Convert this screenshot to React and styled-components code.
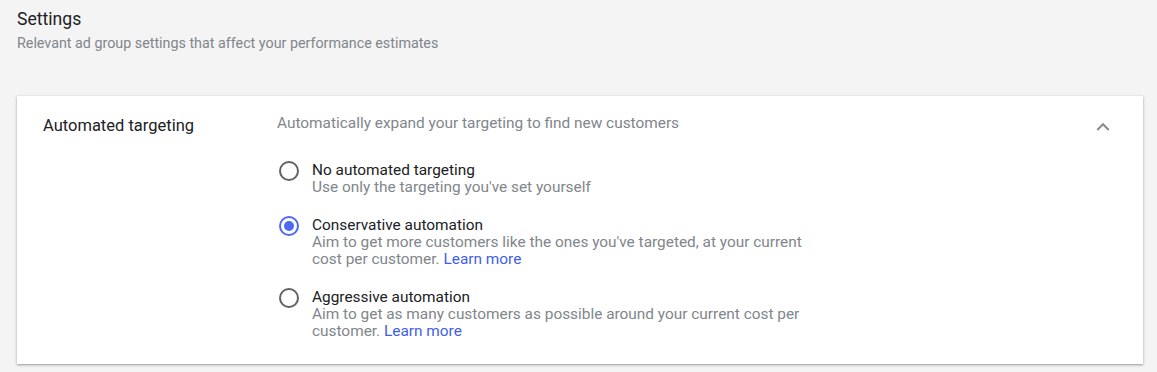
import React, { useState } from 'react';
import styled, { createGlobalStyle } from 'styled-components';

const options = [
  {
    id: 'none',
    title: 'No automated targeting',
    desc: "Use only the targeting you've set yourself",
    learn: false
  },
  {
    id: 'conservative',
    title: 'Conservative automation',
    desc: "Aim to get more customers like the ones you've targeted, at your current cost per customer.",
    learn: true
  },
  {
    id: 'aggressive',
    title: 'Aggressive automation',
    desc: 'Aim to get as many customers as possible around your current cost per customer.',
    learn: true
  }
];

function App() {
  const [selected, setSelected] = useState('conservative');

  return (
    <>
      <GlobalStyle />
      <Page>
        <Header>
          <Title>Settings</Title>
          <Subtitle>Relevant ad group settings that affect your performance estimates</Subtitle>
        </Header>
        <Card>
          <Label>Automated targeting</Label>
          <Content>
            <Description>Automatically expand your targeting to find new customers</Description>
            <OptionList>
              {options.map((o) => (
                <Option key={o.id} onClick={() => setSelected(o.id)}>
                  <Radio checked={selected === o.id} />
                  <OptionText>
                    <OptionTitle>{o.title}</OptionTitle>
                    <OptionDesc>
                      {o.desc}
                      {o.learn && <> <Link>Learn more</Link></>}
                    </OptionDesc>
                  </OptionText>
                </Option>
              ))}
            </OptionList>
          </Content>
          <Chevron viewBox="0 0 24 24">
            <path d="M7.4 15.4 12 10.8l4.6 4.6L18 14l-6-6-6 6z" />
          </Chevron>
        </Card>
      </Page>
    </>
  );
}

export default App;

const GlobalStyle = createGlobalStyle`
  body {
    margin: 0;
    background: #f4f4f4;
    font-family: Roboto, "Liberation Sans", Arial, sans-serif;
  }
`;

const Page = styled.div`
  padding: 8px 14px 0 17px;
  height: 372px;
  box-sizing: border-box;
`;

const Header = styled.div`
  margin-bottom: 40px;
`;

const Title = styled.div`
  font-size: 17.6px;
  line-height: 22px;
  color: #202124;
`;

const Subtitle = styled.div`
  font-size: 14.3px;
  line-height: 26px;
  color: #80868b;
`;

const Card = styled.div`
  display: flex;
  align-items: flex-start;
  background: #fff;
  height: 268px;
  box-sizing: border-box;
  padding: 16px 0 0 26px;
  box-shadow: 0 1px 3px rgba(0, 0, 0, 0.28), 0 1px 1px rgba(0, 0, 0, 0.1);
`;

const Label = styled.div`
  width: 234px;
  flex-shrink: 0;
  font-size: 16.5px;
  line-height: 28px;
  color: #202124;
`;

const Content = styled.div`
  flex: 1;
`;

const Description = styled.div`
  font-size: 15.4px;
  line-height: 22px;
  color: #80868b;
  margin-bottom: 27px;
`;

const OptionList = styled.div`
  display: flex;
  flex-direction: column;
  gap: 20px;
`;

const Option = styled.div`
  display: flex;
  align-items: flex-start;
  gap: 13px;
  margin-left: 2px;
  cursor: pointer;
`;

const Radio = styled.span`
  width: 20px;
  height: 20px;
  box-sizing: border-box;
  border-radius: 50%;
  border: 2px solid ${(p) => (p.checked ? '#4e6af2' : '#5f6368')};
  flex-shrink: 0;
  display: flex;
  align-items: center;
  justify-content: center;

  &::after {
    content: '';
    width: 10px;
    height: 10px;
    border-radius: 50%;
    background: #4e6af2;
    display: ${(p) => (p.checked ? 'block' : 'none')};
  }
`;

const OptionText = styled.div`
  width: 500px;
  padding-top: 1px;
`;

const OptionTitle = styled.div`
  font-size: 15.4px;
  line-height: 17px;
  color: #202124;
`;

const OptionDesc = styled.div`
  font-size: 15.4px;
  line-height: 17px;
  color: #80868b;
`;

const Link = styled.span`
  color: #3f5ee8;
`;

const Chevron = styled.svg`
  width: 26px;
  height: 26px;
  fill: #8a8e93;
  margin: 2px 27px 0 0;
`;
